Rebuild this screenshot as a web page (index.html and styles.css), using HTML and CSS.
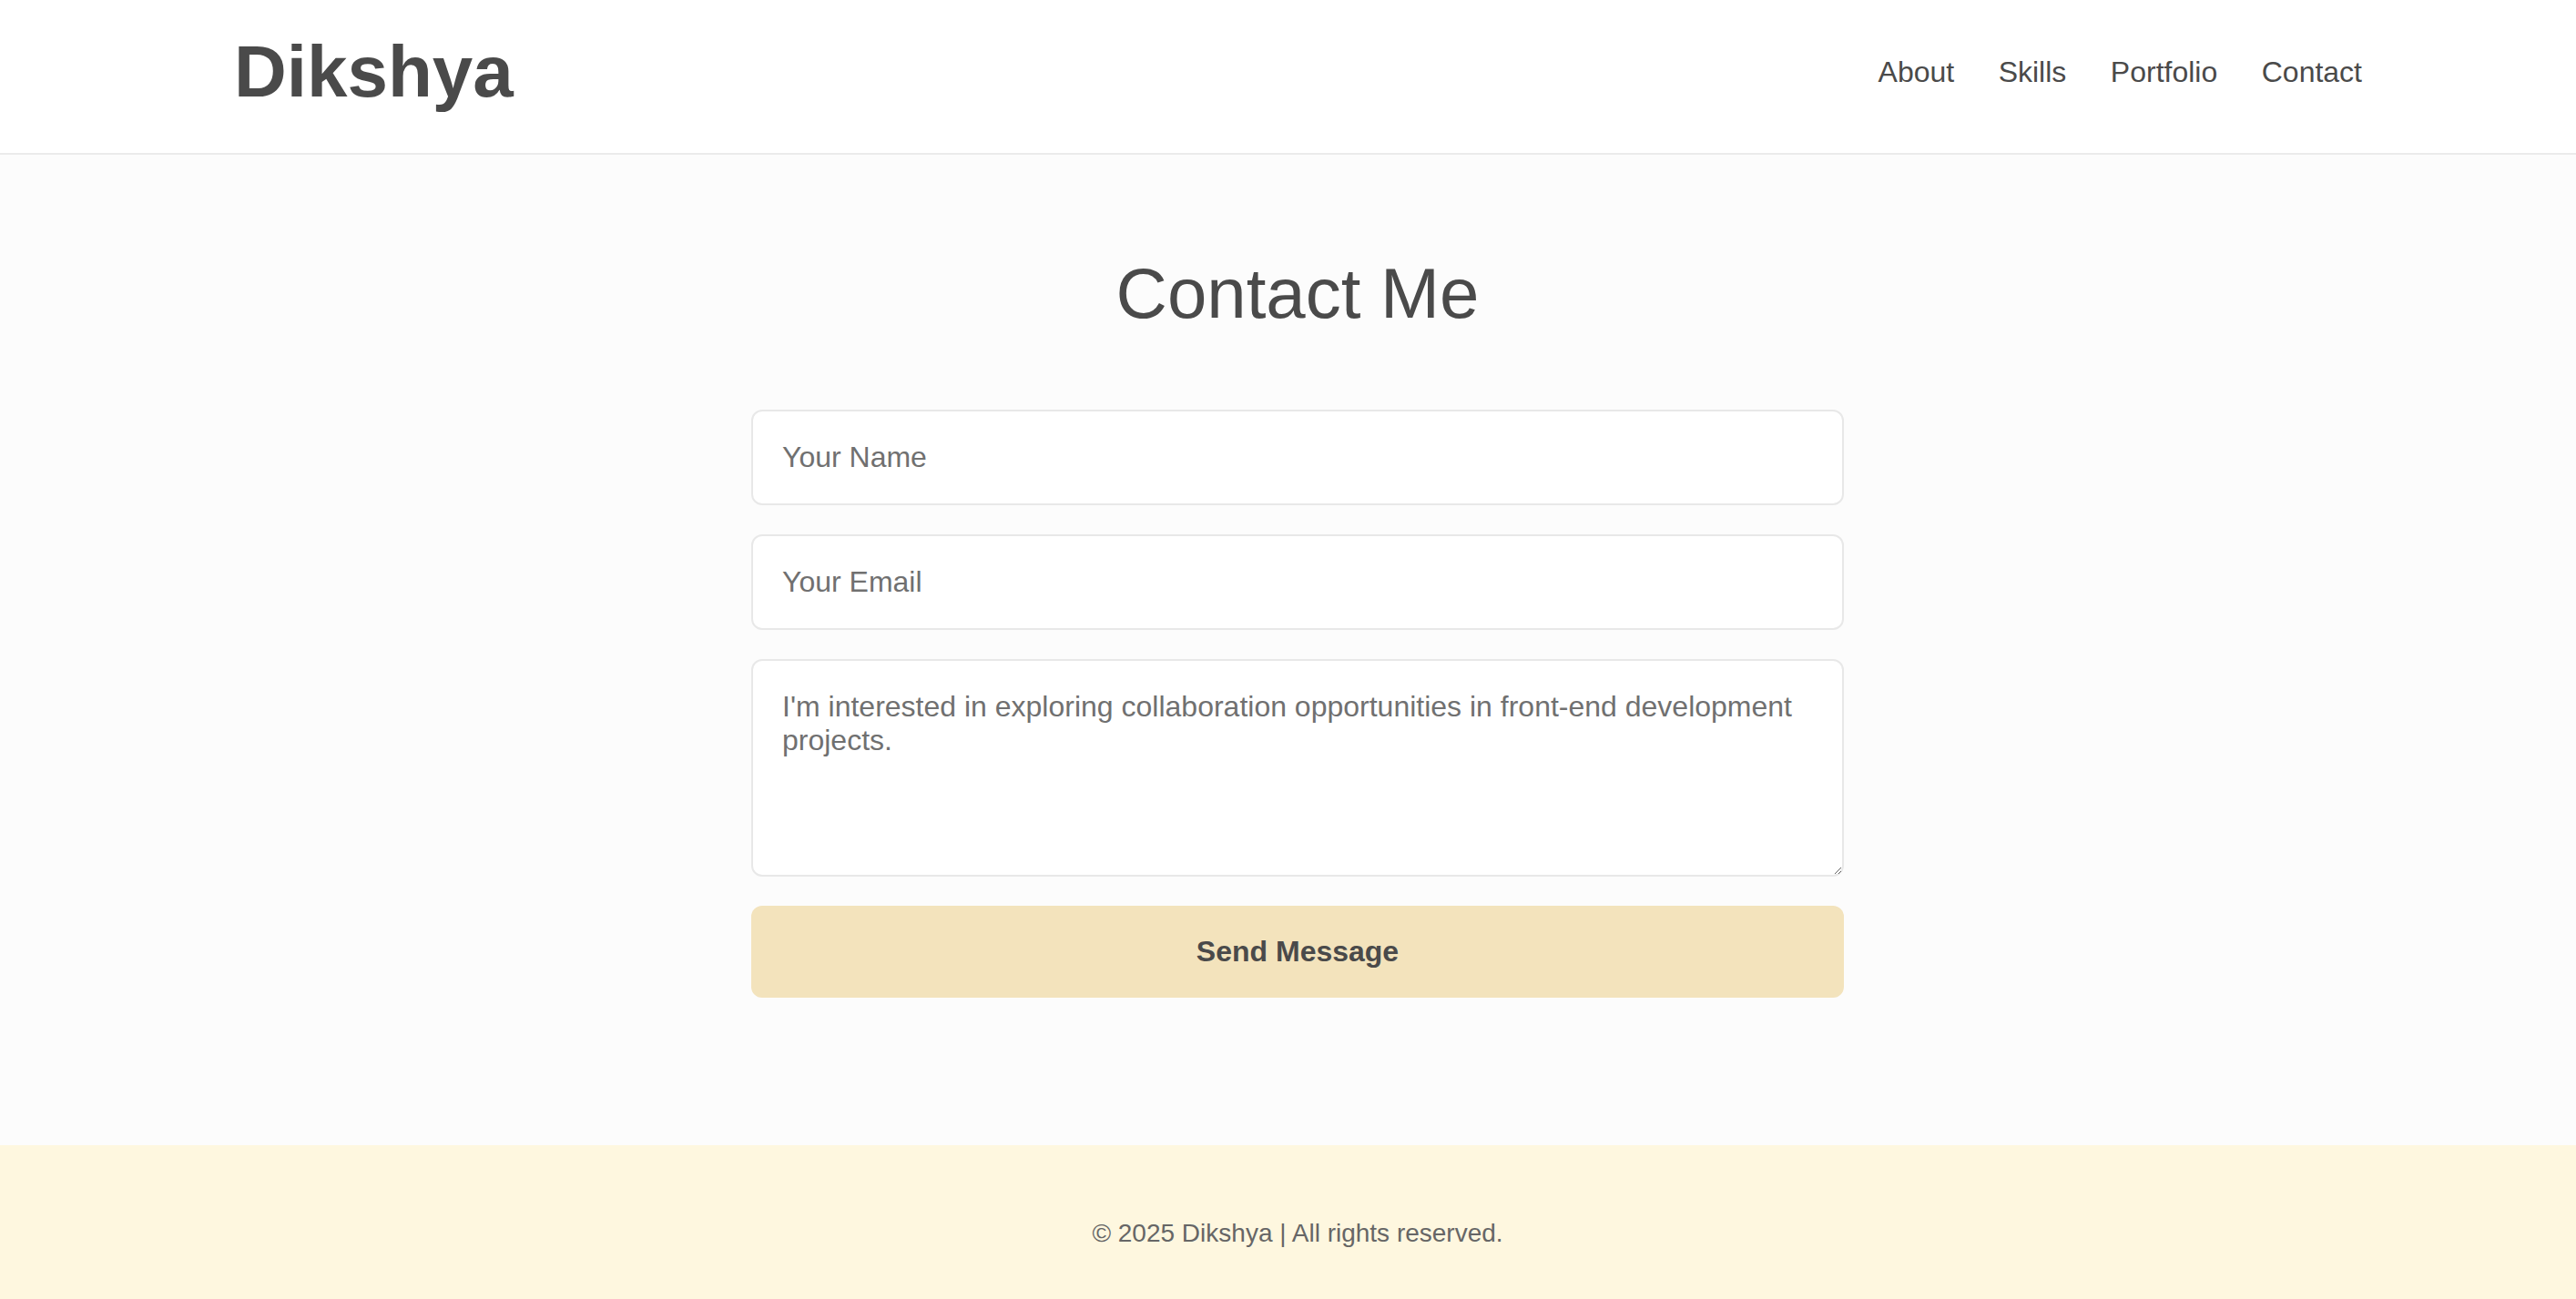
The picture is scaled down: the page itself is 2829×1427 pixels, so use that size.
FILE: index.html
```html
<!DOCTYPE html>
<html lang="en">
<head>
<meta charset="utf-8">
<title>Dikshya - Contact</title>
<link rel="stylesheet" href="styles.css">
</head>
<body>
<header class="site-header">
  <div class="logo">Dikshya</div>
  <nav class="nav">
    <a href="#about">About</a>
    <a href="#skills">Skills</a>
    <a href="#portfolio">Portfolio</a>
    <a href="#contact">Contact</a>
  </nav>
</header>
<main class="contact" id="contact">
  <h2 class="contact-title">Contact Me</h2>
  <form class="contact-form">
    <input class="field" type="text" placeholder="Your Name">
    <input class="field" type="email" placeholder="Your Email">
    <textarea class="field field-message" placeholder="I'm interested in exploring collaboration opportunities in front-end development projects."></textarea>
    <button class="send-btn" type="button">Send Message</button>
  </form>
</main>
<footer class="site-footer">
  <p class="footer-text">© 2025 Dikshya | All rights reserved.</p>
</footer>
</body>
</html>
```
FILE: styles.css
```css
* {
  box-sizing: border-box;
}

html, body {
  margin: 0;
  padding: 0;
}

body {
  font-family: "Liberation Sans", Arial, sans-serif;
  color: #4a4a4a;
  background: #fcfcfc;
}

.site-header {
  display: flex;
  align-items: center;
  justify-content: space-between;
  height: 170px;
  padding: 35px 235px 45px 257px;
  background: #ffffff;
  border-bottom: 2px solid #ebebeb;
}

.logo {
  font-size: 80px;
  font-weight: bold;
  color: #4a4a4a;
}

.nav {
  display: flex;
  gap: 48.5px;
}

.nav a {
  font-size: 32px;
  color: #4a4a4a;
  text-decoration: none;
}

.contact {
  padding: 107px 0 162px 21px;
  text-align: center;
}

.contact-title {
  margin: 0 0 82px;
  font-size: 78px;
  font-weight: normal;
  color: #4a4a4a;
}

.contact-form {
  width: 1200px;
  margin: 0 auto;
  display: flex;
  flex-direction: column;
  gap: 32px;
}

.field {
  display: block;
  width: 100%;
  padding: 32px 31px 32px 32px;
  font-family: "Liberation Sans", Arial, sans-serif;
  font-size: 32px;
  color: #4a4a4a;
  background: #ffffff;
  border: 2px solid #e8e8e8;
  border-radius: 12px;
  outline: none;
}

.field::placeholder {
  color: #707070;
}

.field-message {
  height: 239px;
  line-height: normal;
}

.send-btn {
  display: block;
  width: 100%;
  padding: 32px;
  font-family: "Liberation Sans", Arial, sans-serif;
  font-size: 32px;
  font-weight: bold;
  color: #4a4a4a;
  background: #f3e3bc;
  border: none;
  border-radius: 12px;
}

.site-footer {
  background: #fef7df;
  padding: 81px 0 80px 21px;
  text-align: center;
}

.footer-text {
  margin: 0;
  font-size: 28px;
  color: #666666;
}
```
